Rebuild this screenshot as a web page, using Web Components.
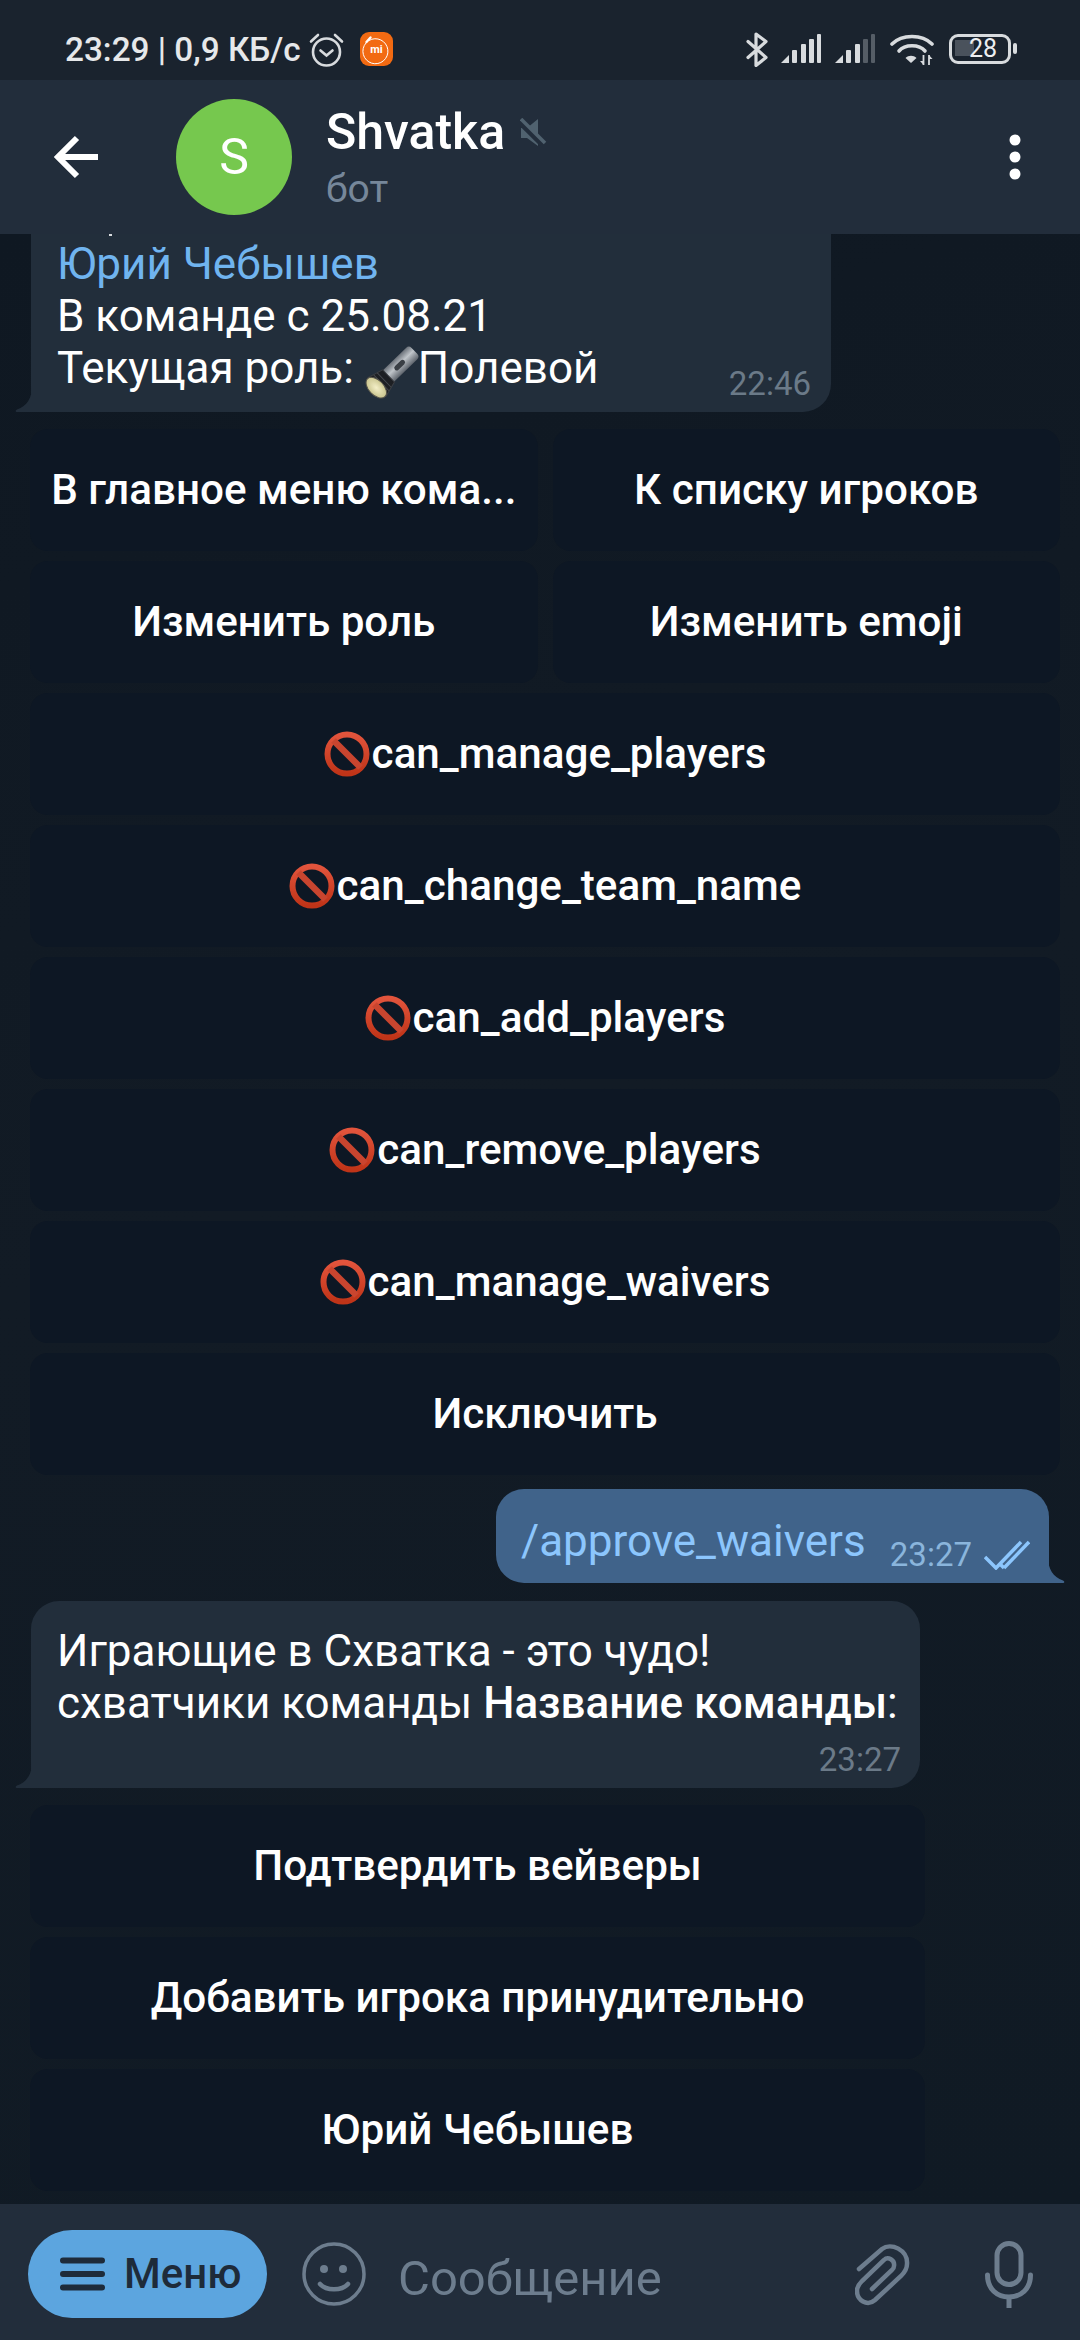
<!DOCTYPE html>
<html>
<head>
<meta charset="utf-8">
<style>
    html, body { margin: 0; padding: 0; }
    body {
        width: 1080px;
        height: 2340px;
        display: flex;
        flex-direction: column;
        overflow: hidden;
        background: #111a24;
        font-family: Roboto, "Noto Sans", sans-serif;
        color: #fff;
    }
    .link { color: #70b4ef; }
    b { font-weight: 500; }
</style>
</head>
<body>
<status-bar></status-bar>
<chat-header name="Shvatka" sub="бот" letter="S"></chat-header>
<chat-view>
    <tg-bubble time="22:46" style="width:800px;--pad-top:60px;--pad-right:20px;--text-bottom:10px">
        <span class="link">Юрий Чебышев</span><br>
        В команде с 25.08.21<br>
        Текущая роль: <tg-flashlight></tg-flashlight>Полевой
    </tg-bubble>
    <kb-grid style="width:1030px;margin-top:17px">
        <kb-button>В главное меню кома...</kb-button>
        <kb-button>К списку игроков</kb-button>
        <kb-button>Изменить роль</kb-button>
        <kb-button>Изменить emoji</kb-button>
        <kb-button wide><tg-noentry></tg-noentry>can_manage_players</kb-button>
        <kb-button wide><tg-noentry></tg-noentry>can_change_team_name</kb-button>
        <kb-button wide><tg-noentry></tg-noentry>can_add_players</kb-button>
        <kb-button wide><tg-noentry></tg-noentry>can_remove_players</kb-button>
        <kb-button wide><tg-noentry></tg-noentry>can_manage_waivers</kb-button>
        <kb-button wide>Исключить</kb-button>
    </kb-grid>
    <tg-bubble out time="23:27" style="width:553px;margin-top:14px;align-self:flex-end;margin-right:31px;--pad-top:26px;--pad-left:25px;--pad-right:19px;--text-bottom:8px">/approve_waivers</tg-bubble>
    <tg-bubble time="23:27" style="width:889px;margin-top:18px;--pad-top:24px;--pad-right:19px">
        Играющие в Схватка - это чудо!<br>
        схватчики команды <b>Название команды</b>:
    </tg-bubble>
    <kb-grid style="width:895px;margin-top:17px">
        <kb-button wide>Подтвердить вейверы</kb-button>
        <kb-button wide>Добавить игрока принудительно</kb-button>
        <kb-button wide>Юрий Чебышев</kb-button>
    </kb-grid>
</chat-view>
<chat-input placeholder="Сообщение"></chat-input>

<script>
const statusTemplate = document.createElement('template');
statusTemplate.innerHTML = `
    <style>
        :host {
            display: flex;
            flex: none;
            height: 80px;
            box-sizing: border-box;
            padding: 32px 63px 0 65px;
            background: #1a232e;
            color: #e6e8ea;
            align-items: flex-start;
        }
        svg { display: block; flex: none; }
        .txt { font: 500 33.3px/36px Roboto, sans-serif; white-space: nowrap; width: 244px; }
        .right { margin-left: auto; display: flex; align-items: flex-start; }
        .battery {
            width: 62px;
            height: 30px;
            box-sizing: border-box;
            margin-top: 2px;
            border: 3.5px solid #d8dbde;
            border-radius: 9px;
            background: linear-gradient(#4a525c, #4a525c) 3px 3px / 19px 16px no-repeat;
            font: 400 25px/23px Roboto, sans-serif;
            color: #eceef0;
            text-align: center;
            padding-left: 6px;
        }
        .nub { width: 4px; height: 11px; margin: 11px 0 0 2px; background: #d8dbde; border-radius: 2px; }
    </style>
    <span class="txt">23:29 | 0,9 КБ/с</span>
    <svg width="35" height="35" viewBox="0 0 35 35" fill="none" stroke="#d8dbde" stroke-width="2.6">
        <circle cx="17.5" cy="20" r="13.5"/>
        <path d="M11.5 18.5l6 5 6-5" stroke-linecap="round"/>
        <path d="M2 9.5L9 3M33 9.5L26 3" stroke-linecap="round"/>
    </svg>
    <svg width="33" height="34" viewBox="0 0 33 34" style="margin-left:16px">
        <rect width="33" height="34" rx="9" fill="#f26a12"/>
        <path d="M9 8.5A12.5 12.5 0 1 1 6 11" fill="none" stroke="#fff" stroke-width="1"/>
        <path d="M6.5 10L10.5 5.5" stroke="#fff" stroke-width="2.4" stroke-linecap="round"/>
        <text x="16.5" y="21" font-family="Roboto" font-weight="700" font-size="11" fill="#fff" text-anchor="middle">mi</text>
    </svg>
    <div class="right">
        <svg width="22" height="35" viewBox="0 0 22 35" fill="none" stroke="#d8dbde" stroke-width="3.2" stroke-linejoin="round" stroke-linecap="round">
            <path d="M2 9.5L20 25.5 10 33.5V2L20 9.5 2 25.5"/>
        </svg>
        <svg width="40" height="29" viewBox="0 0 40 29" style="margin:2px 0 0 13px" fill="#d8dbde">
            <path d="M0 29L8 21V29Z"/><rect x="11" y="16" width="5" height="13" rx="1"/><rect x="20" y="10" width="5" height="19" rx="1"/><rect x="28" y="5" width="5" height="24" rx="1"/><rect x="36" y="0" width="4" height="29" rx="1"/>
        </svg>
        <svg width="40" height="29" viewBox="0 0 40 29" style="margin:2px 0 0 14px" fill="#d8dbde">
            <path d="M0 29L8 21V29Z"/><rect x="11" y="16" width="5" height="13" rx="1"/><rect x="20" y="10" width="5" height="19" rx="1"/><rect x="28" y="5" width="5" height="24" rx="1" fill="#555d66"/><rect x="36" y="0" width="4" height="29" rx="1" fill="#555d66"/>
        </svg>
        <svg width="44" height="34" viewBox="0 0 44 34" style="margin:1px 0 0 15px" fill="none" stroke="#d8dbde" stroke-width="3.6" stroke-linecap="round">
            <path d="M2 11C12 1 32 1 42 11"/>
            <path d="M9 18C15 11 29 11 35 18"/>
            <path d="M15.5 25l5.5 5 5.5-5c-3-3-8-3-11 0z" fill="#d8dbde" stroke="none"/>
            <path d="M33.5 22v10M39 22v10" stroke-width="1.8" stroke-linecap="butt"/>
            <path d="M30 28l3.500 4v-4zM42.500 26L39 22v4z" fill="#d8dbde" stroke="none"/>
        </svg>
        <div class="battery" style="margin-left:15px">28</div>
        <div class="nub"></div>
    </div>
`;
class StatusBar extends HTMLElement {
    constructor() {
        super();
        this.attachShadow({mode: 'open'});
        this.shadowRoot.appendChild(statusTemplate.content.cloneNode(true));
    }
}
customElements.define('status-bar', StatusBar);

const headerTemplate = document.createElement('template');
headerTemplate.innerHTML = `
    <style>
        :host {
            display: flex;
            flex: none;
            position: relative;
            z-index: 1;
            height: 154px;
            box-sizing: border-box;
            padding: 0 59px 0 54px;
            background: #222d3b;
            align-items: center;
        }
        svg { display: block; flex: none; }
        .avatar {
            width: 116px;
            height: 116px;
            margin-left: 78px;
            border-radius: 50%;
            background: #76c84e;
            color: #fff;
            font: 400 50px/116px Roboto, sans-serif;
            text-align: center;
        }
        .info { margin-left: 34px; }
        .title { display: flex; align-items: center; height: 58px; font: 500 50px/58px Roboto, sans-serif; color: #fff; }
        .title svg { margin: 2px 0 0 15px; }
        .sub { margin-top: 5px; font: 400 39px/46px Roboto, sans-serif; color: #76879a; }
        .dots { margin-left: auto; }
        i { position: absolute; left: 109px; top: 154px; width: 3px; height: 2px; background: #d8dbde; }
    </style>
    <svg width="44" height="44" viewBox="0 0 44 44" fill="none" stroke="#fff" stroke-width="6">
        <path d="M44 22H4M23 3L4 22l19 19"/>
    </svg>
    <div class="avatar"></div>
    <div class="info">
        <div class="title"><span class="name"></span>
            <svg width="27" height="29" viewBox="0 0 27 29" fill="#50626f">
                <path d="M1 10h6L18 1v27L7 20H1z"/>
                <path d="M-1 3L22 26" stroke="#222d3b" stroke-width="6"/>
                <path d="M1 1L25 25" stroke="#50626f" stroke-width="3.500"/>
            </svg>
        </div>
        <div class="sub"></div>
    </div>
    <svg class="dots" width="12" height="46" viewBox="0 0 12 46" fill="#fff">
        <circle cx="6" cy="6" r="5.500"/><circle cx="6" cy="23" r="5.500"/><circle cx="6" cy="40" r="5.500"/>
    </svg>
    <i></i>
`;
class ChatHeader extends HTMLElement {
    constructor() {
        super();
        this.attachShadow({mode: 'open'});
        this.shadowRoot.appendChild(headerTemplate.content.cloneNode(true));
        this.shadowRoot.querySelector('.name').innerText = this.getAttribute('name');
        this.shadowRoot.querySelector('.sub').innerText = this.getAttribute('sub');
        this.shadowRoot.querySelector('.avatar').innerText = this.getAttribute('letter');
    }
}
customElements.define('chat-header', ChatHeader);

const viewTemplate = document.createElement('template');
viewTemplate.innerHTML = `
    <style>
        :host {
            display: flex;
            flex: 1;
            min-height: 0;
            flex-direction: column;
            justify-content: flex-end;
            align-items: flex-start;
            box-sizing: border-box;
            padding: 0 0 13px 30px;
            overflow: hidden;
            background: linear-gradient(160deg, #0f1822 0%, #121b25 45%, #101a24 100%);
        }
    </style>
    <slot></slot>
`;
class ChatView extends HTMLElement {
    constructor() {
        super();
        this.attachShadow({mode: 'open'});
        this.shadowRoot.appendChild(viewTemplate.content.cloneNode(true));
    }
}
customElements.define('chat-view', ChatView);

const bubbleTemplate = document.createElement('template');
bubbleTemplate.innerHTML = `
    <style>
        :host {
            display: flex;
            flex: none;
            position: relative;
            box-sizing: border-box;
            flex-wrap: wrap;
            justify-content: space-between;
            align-items: flex-end;
            margin-left: 1px;
            padding: var(--pad-top, 24px) var(--pad-right, 20px) 8px var(--pad-left, 26px);
            border-radius: 28px 28px 28px 0;
            background: #222e3b;
            color: #fff;
            font: 400 44px/52px Roboto, sans-serif;
        }
        :host([out]) {
            border-radius: 28px 28px 0 28px;
            background: #40638a;
            color: #8cc6fd;
        }
        .text { padding-bottom: var(--text-bottom, 11px); white-space: nowrap; }
        .meta {
            display: flex;
            align-items: center;
            margin-left: auto;
            font-size: 33px;
            line-height: 40px;
            color: #6b7a88;
        }
        :host([out]) .meta { color: #8ab5dc; }
        .meta svg { display: none; margin-left: 12px; }
        :host([out]) .meta svg { display: block; }
        .tail { position: absolute; left: -16px; bottom: 0; display: block; }
        :host([out]) .tail { left: auto; right: -16px; transform: scaleX(-1); }
    </style>
    <div class="text"><slot></slot></div>
    <div class="meta"><span class="time"></span>
        <svg width="46" height="30" viewBox="0 0 46 30" fill="none" stroke="#8cc6fd" stroke-width="3.500">
            <path d="M1 17l11 11L37 2"/><path d="M20 28L45 2"/><path d="M16 24l4 4"/>
        </svg>
    </div>
    <svg class="tail" width="17" height="26" viewBox="0 0 17 26">
        <path d="M17 0C17 12 12 20 2 23.500 0 24.500 0.500 26 2 26H17Z" fill="currentColor"/>
    </svg>
`;
class TgBubble extends HTMLElement {
    constructor() {
        super();
        this.attachShadow({mode: 'open'});
        this.shadowRoot.appendChild(bubbleTemplate.content.cloneNode(true));
        this.shadowRoot.querySelector('.time').innerText = this.getAttribute('time');
        this.shadowRoot.querySelector('.tail').style.color = this.hasAttribute('out') ? '#40638a' : '#222e3b';
    }
}
customElements.define('tg-bubble', TgBubble);

const gridTemplate = document.createElement('template');
gridTemplate.innerHTML = `
    <style>
        :host {
            display: grid;
            flex: none;
            grid-template-columns: 1fr 1fr;
            column-gap: 15px;
            row-gap: 10px;
        }
    </style>
    <slot></slot>
`;
class KbGrid extends HTMLElement {
    constructor() {
        super();
        this.attachShadow({mode: 'open'});
        this.shadowRoot.appendChild(gridTemplate.content.cloneNode(true));
    }
}
customElements.define('kb-grid', KbGrid);

const buttonTemplate = document.createElement('template');
buttonTemplate.innerHTML = `
    <style>
        :host {
            display: flex;
            height: 122px;
            align-items: center;
            justify-content: center;
            border-radius: 18px;
            background: #0d1724;
            color: #fff;
            font: 500 42.2px/48px Roboto, sans-serif;
            white-space: nowrap;
        }
        :host([wide]) { grid-column: 1 / -1; }
    </style>
    <slot></slot>
`;
class KbButton extends HTMLElement {
    constructor() {
        super();
        this.attachShadow({mode: 'open'});
        this.shadowRoot.appendChild(buttonTemplate.content.cloneNode(true));
    }
}
customElements.define('kb-button', KbButton);

const noentryTemplate = document.createElement('template');
noentryTemplate.innerHTML = `
    <style>
        :host { display: inline-block; flex: none; width: 48px; height: 46px; }
        svg { display: block; }
    </style>
    <svg width="46" height="46" viewBox="0 0 46 46" fill="none">
        <defs>
            <linearGradient id="r" x1="0" y1="0" x2="0" y2="1">
                <stop offset="0" stop-color="#e2543c"/><stop offset="1" stop-color="#bf3418"/>
            </linearGradient>
        </defs>
        <circle cx="23" cy="23" r="19.500" stroke="url(#r)" stroke-width="6"/>
        <path d="M9.500 9.500l27 27" stroke="#c9452f" stroke-width="6.500"/>
    </svg>
`;
class TgNoentry extends HTMLElement {
    constructor() {
        super();
        this.attachShadow({mode: 'open'});
        this.shadowRoot.appendChild(noentryTemplate.content.cloneNode(true));
    }
}
customElements.define('tg-noentry', TgNoentry);

const flashlightTemplate = document.createElement('template');
flashlightTemplate.innerHTML = `
    <style>
        :host { display: inline-block; width: 53px; height: 52px; vertical-align: -5px; margin: -10px 0; }
        svg { display: block; overflow: visible; }
    </style>
    <svg width="53" height="54" viewBox="0 0 53 54">
        <defs>
            <linearGradient id="b" x1="0" y1="0" x2="1" y2="0">
                <stop offset="0" stop-color="#6a7078"/><stop offset=".45" stop-color="#c0c5ca"/><stop offset="1" stop-color="#5f656d"/>
            </linearGradient>
            <radialGradient id="l">
                <stop offset="0" stop-color="#f4efc8"/><stop offset="1" stop-color="#c9c48e"/>
            </radialGradient>
        </defs>
        <g transform="translate(12 41) rotate(46)">
            <rect x="-8" y="-52" width="16" height="40" rx="4" fill="url(#b)"/>
            <rect x="-2.500" y="-38" width="5" height="13" rx="2.500" fill="#3a3f45"/>
            <path d="M-8.500 -16H8.500L13 0H-13Z" fill="#1d1f23" stroke="#3a3d42" stroke-width="1"/>
            <path d="M-10 -10H10M-11 -6H11" stroke="#45484e" stroke-width="1"/>
            <ellipse cx="0" cy="1" rx="12.500" ry="7.500" fill="url(#l)" stroke="#55534a" stroke-width="1"/>
        </g>
    </svg>
`;
class TgFlashlight extends HTMLElement {
    constructor() {
        super();
        this.attachShadow({mode: 'open'});
        this.shadowRoot.appendChild(flashlightTemplate.content.cloneNode(true));
    }
}
customElements.define('tg-flashlight', TgFlashlight);

const inputTemplate = document.createElement('template');
inputTemplate.innerHTML = `
    <style>
        :host {
            display: flex;
            flex: none;
            height: 136px;
            box-sizing: border-box;
            padding: 4px 47px 0 28px;
            align-items: center;
            background: #222d3b;
            color: #6d7d8e;
        }
        svg { display: block; flex: none; }
        .menu {
            display: flex;
            flex: none;
            align-items: center;
            box-sizing: border-box;
            width: 239px;
            height: 88px;
            padding-left: 32px;
            border-radius: 44px;
            background: #5ca5df;
            color: #1e2b3a;
            font: 500 42px/48px Roboto, sans-serif;
        }
        .menu span { margin-left: 19px; }
        .smile { margin-left: 35px; }
        .ph { margin: 10px 0 0 32px; font: 400 49px/56px Roboto, sans-serif; }
        .clip { margin-left: auto; }
        .mic { margin-left: 75px; }
    </style>
    <div class="menu">
        <svg width="45" height="34" viewBox="0 0 45 34" fill="none" stroke="#1e2b3a" stroke-width="6" stroke-linecap="round">
            <path d="M3 3.500H42M3 17H42M3 30.500H42"/>
        </svg>
        <span>Меню</span>
    </div>
    <svg class="smile" width="64" height="64" viewBox="0 0 64 64" fill="none" stroke="#6d7d8e">
        <circle cx="32" cy="32" r="30" stroke-width="3.500"/>
        <circle cx="22" cy="27" r="4" fill="#6d7d8e" stroke="none"/>
        <circle cx="41" cy="27" r="4" fill="#6d7d8e" stroke="none"/>
        <path d="M18 42C24 49 40 49 46 42" stroke-width="4.500" stroke-linecap="round"/>
    </svg>
    <span class="ph"></span>
    <svg class="clip" width="55" height="63" viewBox="0 0 55 63" fill="none" stroke="#6d7d8e" stroke-width="4.500" stroke-linecap="round">
        <path d="M4 26L27 6C36-1 53 7 52 21C52 26 50 29 46 33L20 57C12 64 2 57 2 48C2 44 4 41 7 38L29 17C33 13 40 17 39 23C39 25 38 26 37 27L17 46"/>
    </svg>
    <svg class="mic" width="48" height="67" viewBox="0 0 48 67" fill="none" stroke="#6d7d8e" stroke-width="5">
        <rect x="12" y="2.500" width="24" height="41" rx="12"/>
        <path d="M2.500 34C2.500 48 12 56 24 56S45.500 48 45.500 34" stroke-linecap="round"/>
        <path d="M24 56V67"/>
    </svg>
`;
class ChatInput extends HTMLElement {
    constructor() {
        super();
        this.attachShadow({mode: 'open'});
        this.shadowRoot.appendChild(inputTemplate.content.cloneNode(true));
        this.shadowRoot.querySelector('.ph').innerText = this.getAttribute('placeholder');
    }
}
customElements.define('chat-input', ChatInput);
</script>
</body>
</html>
